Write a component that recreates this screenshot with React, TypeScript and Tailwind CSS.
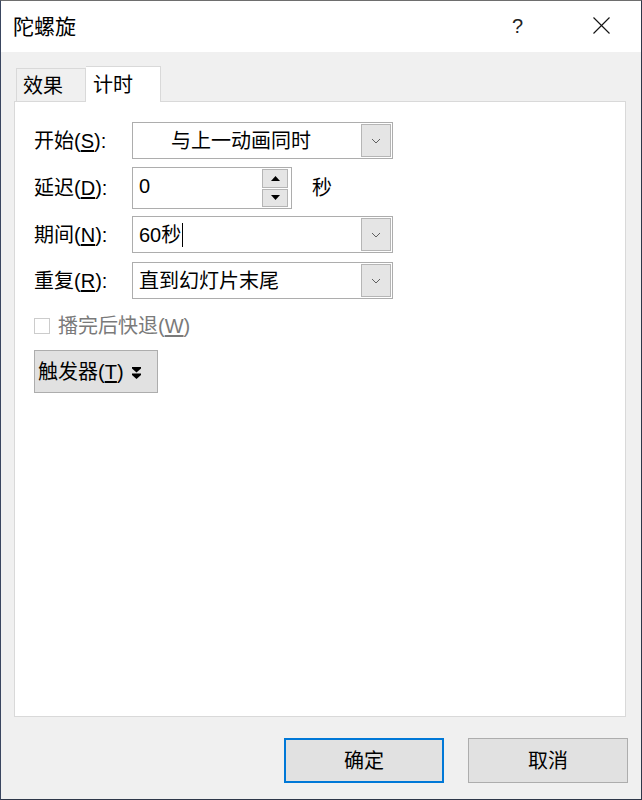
import React from 'react';

const font = { fontFamily: '"Liberation Sans", "Noto Sans CJK SC", sans-serif' };

const Chevron = () => (
	<svg width="10" height="6" viewBox="0 0 10 6" className="text-[#606060]">
		<polyline points="1,1 5,5 9,1" fill="none" stroke="currentColor" strokeWidth="1" />
	</svg>
);

const DropButton = () => (
	<div className="my-[1px] mr-[1px] flex w-[30px] items-center justify-center border border-[#b5b5b5] bg-[#e5e5e5]">
		<Chevron />
	</div>
);

const Label = ({ text, hot }: { text: string; hot: string }) => (
	<div className="w-[98px] shrink-0 text-[20px] text-black">
		{text}(<span className="underline underline-offset-2">{hot}</span>):
	</div>
);

const App: React.FC = () => {
	return (
		<div
			className="flex h-[800px] w-[642px] flex-col border border-t-[#6e6e6e] border-l-[#3a4660] border-r-[#2e3749] border-b-[#2e3749] bg-[#f0f0f0]"
			style={font}
		>
			{/* title bar */}
			<div className="flex h-[51px] shrink-0 items-center bg-white">
				<div className="pl-[12px] text-[21px] text-black">陀螺旋</div>
				<div className="ml-auto mr-[70px] pb-[2px] text-[20px] font-light text-[#222]">?</div>
				<div className="mr-[31px] pb-[2px]">
					<svg width="17" height="17" viewBox="0 0 17 17">
						<line x1="0.5" y1="0.5" x2="16.5" y2="16.5" stroke="#111" strokeWidth="1.1" />
						<line x1="16.5" y1="0.5" x2="0.5" y2="16.5" stroke="#111" strokeWidth="1.1" />
					</svg>
				</div>
			</div>

			{/* body */}
			<div className="flex flex-1 flex-col pl-[13px] pr-[15px]">
				{/* tabs */}
				<div className="mt-[14px] flex items-end pl-[2px]">
					<div className="mb-[-1px] flex h-[34px] w-[70px] items-center border border-b-0 border-[#d9d9d9] bg-[#f0f0f0] pl-[6px] text-[20px] text-black">
						效果
					</div>
					<div className="relative z-10 mb-[-1px] flex h-[36px] w-[75px] items-center border border-b-0 border-l-0 border-[#d9d9d9] bg-white pl-[7px] text-[20px] text-black">
						计时
					</div>
				</div>

				{/* panel */}
				<div className="flex h-[616px] flex-col border border-[#d9d9d9] bg-white pl-[19px] pt-[20px]">
					{/* start */}
					<div className="flex items-center">
						<Label text="开始" hot="S" />
						<div className="flex h-[37px] w-[261px] border border-[#adadad] bg-white">
							<div className="flex flex-1 items-center justify-center pr-[12px] text-[20px] text-black">
								与上一动画同时
							</div>
							<DropButton />
						</div>
					</div>

					{/* delay */}
					<div className="mt-[8px] flex items-center">
						<Label text="延迟" hot="D" />
						<div className="flex h-[42px] w-[160px] border border-[#adadad] bg-white">
							<div className="flex-1 pl-[6px] pt-[3px] text-[20px] text-black">0</div>
							<div className="my-[1px] mr-[3px] flex w-[26px] flex-col">
								<div className="flex flex-1 items-center justify-center border border-[#b5b5b5] bg-[#e5e5e5]">
									<svg width="9" height="5" viewBox="0 0 9 5">
										<polygon points="4.5,0 9,5 0,5" fill="#000" />
									</svg>
								</div>
								<div className="mt-[1px] flex flex-1 items-center justify-center border border-[#b5b5b5] bg-[#e5e5e5]">
									<svg width="9" height="5" viewBox="0 0 9 5">
										<polygon points="0,0 9,0 4.5,5" fill="#000" />
									</svg>
								</div>
							</div>
						</div>
						<div className="ml-[20px] text-[20px] text-black">秒</div>
					</div>

					{/* duration */}
					<div className="mt-[7px] flex items-center">
						<Label text="期间" hot="N" />
						<div className="flex h-[37px] w-[261px] border border-[#adadad] bg-white">
							<div className="flex flex-1 items-center pl-[6px] text-[20px] text-black">
								60秒
								<span className="ml-[1px] inline-block h-[24px] w-[1px] bg-black" />
							</div>
							<DropButton />
						</div>
					</div>

					{/* repeat */}
					<div className="mt-[9px] flex items-center">
						<Label text="重复" hot="R" />
						<div className="flex h-[37px] w-[261px] border border-[#adadad] bg-white">
							<div className="flex flex-1 items-center pl-[6px] text-[20px] text-black">
								直到幻灯片末尾
							</div>
							<DropButton />
						</div>
					</div>

					{/* rewind checkbox */}
					<div className="mt-[15px] flex h-[24px] items-center">
						<div className="h-[16px] w-[16px] border border-[#cccccc] bg-white" />
						<div className="ml-[8px] text-[20px] leading-[24px] text-[#7a7a7a]">
							播完后快退(<span className="underline underline-offset-2">W</span>)
						</div>
					</div>

					{/* trigger */}
					<div className="mt-[12px] flex">
						<div className="flex h-[43px] w-[124px] items-center border border-[#adadad] bg-[#e1e1e1] pl-[3px] text-[20px] text-black">
							触发器(<span className="underline underline-offset-2">T</span>)
							<svg width="9" height="12" viewBox="0 0 9 12" className="ml-[8px] mt-[2px]">
								<polygon points="0,0 9,0 9,1.5 4.5,5.5 0,1.5" fill="#000" />
								<polygon points="0,6.5 9,6.5 9,8 4.5,12 0,8" fill="#000" />
							</svg>
						</div>
					</div>
				</div>

				{/* footer buttons */}
				<div className="mt-[21px] mr-[-2px] flex justify-end gap-[24px]">
					<button className="flex h-[45px] w-[160px] items-center justify-center border-2 border-[#0078d7] bg-[#e1e1e1] text-[20px] text-black">
						确定
					</button>
					<button className="flex h-[45px] w-[160px] items-center justify-center border border-[#adadad] bg-[#e1e1e1] text-[20px] text-black">
						取消
					</button>
				</div>
			</div>
		</div>
	);
};

export default App;
